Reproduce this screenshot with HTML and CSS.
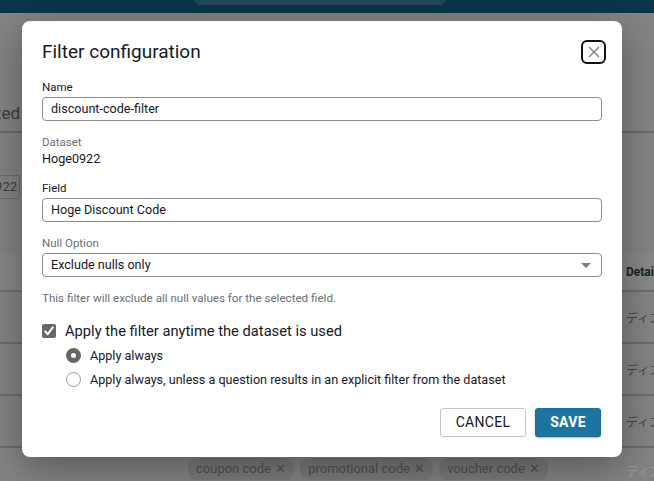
FILE: index.html
```html
<!DOCTYPE html>
<html lang="en">
<head>
    <meta charset="UTF-8">
    <meta name="viewport" content="width=device-width, initial-scale=1.0">
    <title>Filter configuration</title>
    <link rel="stylesheet" href="styles.css">
</head>
<body>

    <!-- dimmed page behind the dialog -->
    <div class="page">
        <div class="topbar">
            <div class="search"></div>
        </div>
        <div class="page_head">
            <div class="clip"><span>Selected</span></div>
        </div>
        <div class="page_mid">
            <div class="clip old_input"><span>Hoge0922</span></div>
        </div>
        <div class="table">
            <div class="row head"><span></span><b>Details</b></div>
            <div class="row"><span></span><span class="jp">ディスカウント</span></div>
            <div class="row"><span></span><span class="jp">ディスカウント</span></div>
            <div class="row"><span></span><span class="jp">ディスカウント</span></div>
            <div class="row last">
                <div class="chips">
                    <span class="chip">coupon code <i>✕</i></span>
                    <span class="chip">promotional code <i>✕</i></span>
                    <span class="chip">voucher code <i>✕</i></span>
                </div>
                <span class="jp">ディスカウント</span>
            </div>
        </div>
    </div>

    <div class="dialog">
        <div class="dialog_head">
            <h1>Filter configuration</h1>
            <div class="close">
                <svg width="14" height="14" viewBox="0 0 14 14"><path d="M2 2L12 12M12 2L2 12" stroke="#7a7a7a" stroke-width="1.3" fill="none"/></svg>
            </div>
        </div>

        <div class="label first">Name</div>
        <div class="input">discount-code-filter</div>

        <div class="label gap grey">Dataset</div>
        <div class="value">Hoge0922</div>

        <div class="label gap">Field</div>
        <div class="input">Hoge Discount Code</div>

        <div class="label gap grey">Null Option</div>
        <div class="input select">
            Exclude nulls only
            <span class="caret"></span>
        </div>

        <div class="hint">This filter will exclude all null values for the selected field.</div>

        <div class="check_row">
            <span class="checkbox">
                <svg width="14" height="14" viewBox="0 0 14 14"><path d="M3.2 7.4L5.8 10.2L10.8 3.4" stroke="#fff" stroke-width="2" fill="none" stroke-linecap="round" stroke-linejoin="round"/></svg>
            </span>
            Apply the filter anytime the dataset is used
        </div>
        <div class="radio_row"><span class="radio on"></span>Apply always</div>
        <div class="radio_row"><span class="radio"></span>Apply always, unless a question results in an explicit filter from the dataset</div>

        <div class="buttons">
            <div class="btn cancel">CANCEL</div>
            <div class="btn save">SAVE</div>
        </div>
    </div>

</body>
</html>
```

FILE: styles.css
```css
*{
    box-sizing: border-box;
    font-family: Roboto, "Noto Sans CJK JP", sans-serif;
}
body{
    margin: 0;
    background-color: #848484;
    overflow: hidden;
}

/* 背景頁面（已被遮罩壓暗） */
.page{
    width: 654px;
    height: 481px;
    color: #3c3c3c;
}
.topbar{
    height: 13px;
    background-color: #0a364b;
}
.search{
    margin-left: 195px;
    width: 250px;
    height: 5px;
    background-color: #234a5b;
    border-radius: 0 0 8px 8px;
}
.page_head{
    height: 120px;
    padding-top: 90px;
    border-bottom: 2px solid #6c6c6c;
}
.clip{
    display: flex;
    justify-content: flex-end;
    width: 20px;
    overflow: hidden;
    white-space: nowrap;
    font-size: 17px;
    line-height: 20px;
}
.page_mid{
    height: 121px;
    padding-top: 42px;
}
.old_input{
    height: 24px;
    font-size: 13px;
    line-height: 22px;
    border: 1px solid #6c6c6c;
    border-left: none;
    border-radius: 0 3px 3px 0;
    padding-right: 2px;
}
.row{
    display: grid;
    grid-template-columns: 1fr 28px;
    align-items: center;
    height: 52px;
    border-bottom: 2px solid #6c6c6c;
    overflow: hidden;
    white-space: nowrap;
}
.row.head{
    height: 38px;
    background-color: #888888;
    font-size: 12px;
    color: #1e1e1e;
}
.jp{
    font-size: 12px;
    color: #454545;
}
.row.last{
    border-bottom: none;
    height: 32px;
    align-items: start;
    padding-top: 10px;
}
.row.last .jp{
    color: #9a9a9a;
    padding-top: 4px;
}
.chips{
    display: flex;
    gap: 6px;
    padding-left: 188px;
}
.chip{
    height: 23px;
    line-height: 22px;
    padding: 0 8px;
    border-radius: 11px;
    background-color: #7a7a7a;
    color: #505050;
    font-size: 13px;
}
.chip i{
    font-style: normal;
    font-size: 13px;
    margin-left: 1px;
}

/* 對話框 */
.dialog{
    position: absolute;
    top: 21px;
    left: 22px;
    width: 600px;
    background-color: #fff;
    border-radius: 8px;
    padding: 19px 20px 20px 20px;
    box-shadow: 0 10px 40px rgba(0, 0, 0, 0.35);
    color: #16191f;
}
.dialog_head{
    display: flex;
    justify-content: space-between;
    align-items: center;
    height: 24px;
}
h1{
    margin: 0;
    font-size: 19px;
    font-weight: 400;
    line-height: 24px;
}
.close{
    display: flex;
    justify-content: center;
    align-items: center;
    width: 25px;
    height: 24px;
    margin-right: -4px;
    border: 2px solid #111;
    border-radius: 6px;
}
.label{
    font-size: 11.5px;
    line-height: 14px;
    margin-bottom: 3px;
}
.label.first{
    margin-top: 16px;
}
.label.gap{
    margin-top: 14px;
}
.grey{
    color: #687078;
}
.value{
    font-size: 12.6px;
    line-height: 16px;
    margin-top: -1px;
}
.input{
    height: 24px;
    border: 1px solid #8d8d8d;
    border-radius: 4px;
    padding: 0 8px;
    font-size: 12.6px;
    line-height: 22px;
}
.select{
    display: flex;
    justify-content: space-between;
    align-items: center;
}
.caret{
    width: 0;
    height: 0;
    border-left: 5px solid transparent;
    border-right: 5px solid transparent;
    border-top: 5px solid #7a7a7a;
    margin-right: 2px;
}
.hint{
    margin-top: 14px;
    font-size: 11.6px;
    line-height: 14px;
    color: #687078;
}
.check_row{
    display: flex;
    align-items: center;
    gap: 9px;
    margin-top: 16px;
    font-size: 14.7px;
    line-height: 20px;
}
.checkbox{
    display: flex;
    width: 14px;
    height: 14px;
    border-radius: 2px;
    background-color: #666;
}
.radio_row{
    display: flex;
    align-items: center;
    gap: 9px;
    height: 24px;
    padding-left: 24px;
    font-size: 12.6px;
}
.check_row + .radio_row{
    margin-top: 2px;
}
.radio{
    width: 15px;
    height: 15px;
    border-radius: 50%;
    border: 1px solid #9a9a9a;
    background-color: #fff;
}
.radio.on{
    border: 5px solid #666;
}
.buttons{
    display: flex;
    justify-content: flex-end;
    gap: 9px;
    margin-top: 17px;
    margin-right: 1px;
}
.btn{
    height: 29px;
    line-height: 27px;
    border-radius: 3px;
    font-size: 14px;
    letter-spacing: 0.3px;
    text-align: center;
}
.cancel{
    width: 86px;
    border: 1px solid #c6c6c6;
    color: #16191f;
}
.save{
    width: 66px;
    border: 1px solid #1a6f96;
    background-color: #1d74a0;
    color: #fff;
    font-weight: 700;
    box-shadow: 0 1px 2px rgba(0, 0, 0, 0.3);
}
```
